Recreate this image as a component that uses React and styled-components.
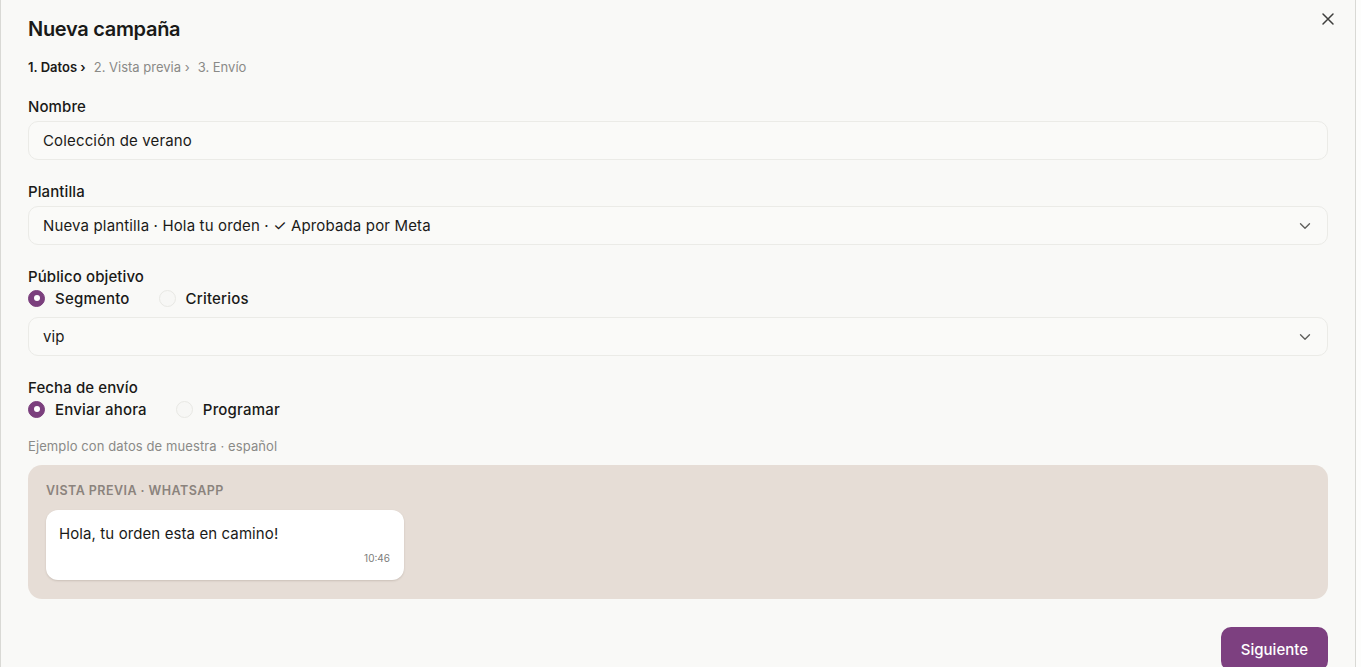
import React from 'react';
import styled, { createGlobalStyle } from 'styled-components';

const GlobalStyle = createGlobalStyle`
  * { box-sizing: border-box; }
  body {
    margin: 0;
    background: #fdfdfc;
    font-family: Inter, "Noto Sans", sans-serif;
    color: #1a1a18;
    -webkit-font-smoothing: antialiased;
  }
`;

const Dialog = styled.div`
  position: relative;
  width: 1356px;
  min-height: 700px;
  background: #f9f9f7;
  border-left: 1px solid #d9d9d5;
  border-right: 1px solid #d9d9d5;
  padding: 17px 27px 24px;
`;

const CloseButton = styled.button`
  position: absolute;
  top: 9px;
  right: 17px;
  width: 20px;
  height: 20px;
  padding: 0;
  border: 0;
  background: none;
  color: #3f3f3d;
  display: flex;
  align-items: center;
  justify-content: center;
  cursor: pointer;
`;

const Title = styled.h2`
  margin: 0;
  font-size: 20px;
  line-height: 24px;
  font-weight: 600;
  letter-spacing: -0.3px;
`;

const Steps = styled.div`
  display: flex;
  gap: 8px;
  margin-top: 18px;
  font-size: 13px;
  line-height: 16px;
`;

const Step = styled.span`
  color: ${p => (p.$active ? '#1a1a18' : '#8a8a87')};
  font-weight: ${p => (p.$active ? 600 : 400)};
`;

const Form = styled.div`
  display: flex;
  flex-direction: column;
  gap: 22px;
  margin-top: 22px;
`;

const Field = styled.div`
  display: flex;
  flex-direction: column;
  gap: ${p => p.$gap ?? 4}px;
`;

const Label = styled.label`
  font-size: 15px;
  line-height: 20px;
  font-weight: 500;
  letter-spacing: 0.1px;
`;

const Box = styled.div`
  height: 39px;
  margin-top: ${p => p.$offset || 0}px;
  display: flex;
  align-items: center;
  justify-content: space-between;
  padding: 0 13px 0 14px;
  border: 1px solid #ebebe7;
  border-radius: 10px;
  background: #fafaf8;
  font-size: 15px;
  letter-spacing: 0.15px;
  color: #1a1a18;
`;

const RadioGroup = styled.div`
  display: flex;
  align-items: center;
  gap: 29px;
  height: 20px;
`;

const RadioOption = styled.label`
  display: flex;
  align-items: center;
  gap: 10px;
  font-size: 15px;
  font-weight: 500;
  letter-spacing: 0.2px;
`;

const RadioDot = styled.span`
  width: 17px;
  height: 17px;
  border-radius: 50%;
  background: ${p => (p.$checked ? '#7b3f7d' : '#f7f7f5')};
  border: 1px solid ${p => (p.$checked ? '#7b3f7d' : '#e8e8e4')};
  display: flex;
  align-items: center;
  justify-content: center;
  &::after {
    content: '';
    display: ${p => (p.$checked ? 'block' : 'none')};
    width: 6px;
    height: 6px;
    border-radius: 50%;
    background: #ffffff;
  }
`;

const Hint = styled.p`
  margin: -4px 0 0;
  font-size: 13px;
  line-height: 18px;
  color: #8a8a87;
  letter-spacing: 0.1px;
`;

const PreviewPanel = styled.section`
  margin-top: -12px;
  background: #e6ddd6;
  border-radius: 14px;
  padding: 18px 18px 19px;
  display: flex;
  flex-direction: column;
  gap: 11px;
`;

const PreviewTitle = styled.div`
  font-size: 12.5px;
  line-height: 16px;
  font-weight: 600;
  color: #8b837d;
  text-transform: uppercase;
  letter-spacing: 0.45px;
`;

const Bubble = styled.div`
  width: 358px;
  background: #ffffff;
  border-radius: 12px;
  box-shadow: 0 1px 2px rgba(80, 60, 50, 0.18);
  padding: 14px 14px 16px 13px;
  display: flex;
  flex-direction: column;
`;

const BubbleText = styled.div`
  font-size: 15px;
  line-height: 20px;
  letter-spacing: 0.1px;
`;

const BubbleTime = styled.div`
  align-self: flex-end;
  margin-top: 8px;
  font-size: 10px;
  line-height: 12px;
  color: #7d7d7a;
`;

const Footer = styled.div`
  display: flex;
  justify-content: flex-end;
  margin-top: 28px;
`;

const PrimaryButton = styled.button`
  height: 44px;
  padding: 0 20px;
  border: 0;
  border-radius: 10px;
  background: #7d4080;
  color: #ffffff;
  font-family: Inter, "Noto Sans", sans-serif;
  font-size: 15px;
  font-weight: 500;
  cursor: pointer;
`;

const Chevron = () => (
  <svg width="18" height="18" viewBox="0 0 24 24" fill="none" stroke="#5f5f5c" strokeWidth="1.8" strokeLinecap="round" strokeLinejoin="round">
    <path d="m6 9 6 6 6-6" />
  </svg>
);

const CloseIcon = () => (
  <svg width="20" height="20" viewBox="0 0 24 24" fill="none" stroke="currentColor" strokeWidth="1.8" strokeLinecap="round">
    <path d="M18 6 6 18M6 6l12 12" />
  </svg>
);

function Radio({ checked, children }) {
  return (
    <RadioOption>
      <RadioDot $checked={checked} />
      {children}
    </RadioOption>
  );
}

export default function App() {
  return (
    <>
      <GlobalStyle />
      <Dialog>
        <CloseButton aria-label="Cerrar">
          <CloseIcon />
        </CloseButton>
        <Title>Nueva campaña</Title>
        <Steps>
          <Step $active>1. Datos ›</Step>
          <Step>2. Vista previa ›</Step>
          <Step>3. Envío</Step>
        </Steps>

        <Form>
          <Field>
            <Label>Nombre</Label>
            <Box>Colección de verano</Box>
          </Field>

          <Field>
            <Label>Plantilla</Label>
            <Box>
              Nueva plantilla · Hola tu orden · ✓ Aprobada por Meta
              <Chevron />
            </Box>
          </Field>

          <Field $gap={1}>
            <Label>Público objetivo</Label>
            <RadioGroup>
              <Radio checked>Segmento</Radio>
              <Radio>Criterios</Radio>
            </RadioGroup>
            <Box $offset={8}>
              vip
              <Chevron />
            </Box>
          </Field>

          <Field $gap={1}>
            <Label>Fecha de envío</Label>
            <RadioGroup>
              <Radio checked>Enviar ahora</Radio>
              <Radio>Programar</Radio>
            </RadioGroup>
          </Field>

          <Hint>Ejemplo con datos de muestra · español</Hint>

          <PreviewPanel>
            <PreviewTitle>Vista previa · WhatsApp</PreviewTitle>
            <Bubble>
              <BubbleText>Hola, tu orden esta en camino!</BubbleText>
              <BubbleTime>10:46</BubbleTime>
            </Bubble>
          </PreviewPanel>
        </Form>

        <Footer>
          <PrimaryButton>Siguiente</PrimaryButton>
        </Footer>
      </Dialog>
    </>
  );
}
